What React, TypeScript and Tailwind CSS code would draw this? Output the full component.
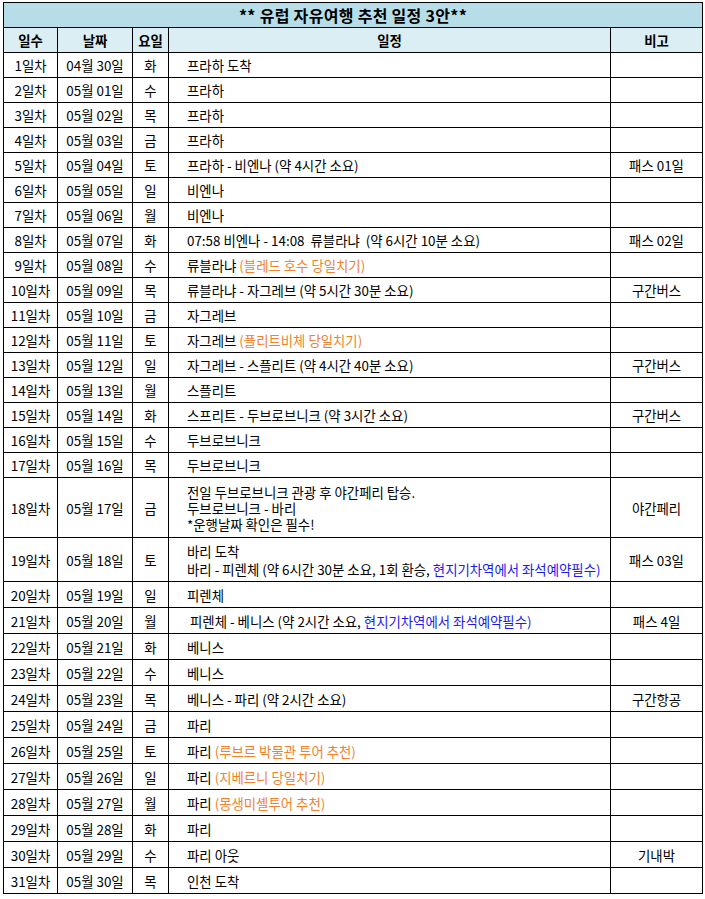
import React from "react";

type Part = { t: string; c?: "orange" | "blue" };
type Row = {
  day: string;
  date: string;
  dow: string;
  plan: Part[][];
  note?: string;
  h: string;
  lead?: string;
  indent?: boolean;
};

const P = (t: string, c?: "orange" | "blue"): Part => ({ t, c });

const rows: Row[] = [
  { day: "1일차", date: "04월 30일", dow: "화", plan: [[P("프라하 도착")]], h: "h-[25px]" },
  { day: "2일차", date: "05월 01일", dow: "수", plan: [[P("프라하")]], h: "h-[25px]" },
  { day: "3일차", date: "05월 02일", dow: "목", plan: [[P("프라하")]], h: "h-[25px]" },
  { day: "4일차", date: "05월 03일", dow: "금", plan: [[P("프라하")]], h: "h-[25px]" },
  { day: "5일차", date: "05월 04일", dow: "토", plan: [[P("프라하 - 비엔나 (약 4시간 소요)")]], note: "패스 01일", h: "h-[25px]" },
  { day: "6일차", date: "05월 05일", dow: "일", plan: [[P("비엔나")]], h: "h-[25px]" },
  { day: "7일차", date: "05월 06일", dow: "월", plan: [[P("비엔나")]], h: "h-[25px]" },
  { day: "8일차", date: "05월 07일", dow: "화", plan: [[P("07:58 비엔나 - 14:08  류블라냐  (약 6시간 10분 소요)")]], note: "패스 02일", h: "h-[25px]" },
  { day: "9일차", date: "05월 08일", dow: "수", plan: [[P("류블라냐 "), P("(블레드 호수 당일치기)", "orange")]], h: "h-[25px]" },
  { day: "10일차", date: "05월 09일", dow: "목", plan: [[P("류블라냐 - 자그레브 (약 5시간 30분 소요)")]], note: "구간버스", h: "h-[25px]" },
  { day: "11일차", date: "05월 10일", dow: "금", plan: [[P("자그레브")]], h: "h-[25px]" },
  { day: "12일차", date: "05월 11일", dow: "토", plan: [[P("자그레브 "), P("(플리트비체 당일치기)", "orange")]], h: "h-[25px]" },
  { day: "13일차", date: "05월 12일", dow: "일", plan: [[P("자그레브 - 스플리트 (약 4시간 40분 소요)")]], note: "구간버스", h: "h-[25px]" },
  { day: "14일차", date: "05월 13일", dow: "월", plan: [[P("스플리트")]], h: "h-[25px]" },
  { day: "15일차", date: "05월 14일", dow: "화", plan: [[P("스프리트 - 두브로브니크 (약 3시간 소요)")]], note: "구간버스", h: "h-[25px]" },
  { day: "16일차", date: "05월 15일", dow: "수", plan: [[P("두브로브니크")]], h: "h-[25px]" },
  { day: "17일차", date: "05월 16일", dow: "목", plan: [[P("두브로브니크")]], h: "h-[25px]" },
  {
    day: "18일차",
    date: "05월 17일",
    dow: "금",
    plan: [[P("전일 두브로브니크 관광 후 야간페리 탑승.")], [P("두브로브니크 - 바리")], [P("*운행날짜 확인은 필수!")]],
    note: "야간페리",
    h: "h-[60px]",
    lead: "leading-[16px]",
  },
  {
    day: "19일차",
    date: "05월 18일",
    dow: "토",
    plan: [[P("바리 도착")], [P("바리 - 피렌체 (약 6시간 30분 소요, 1회 환승, "), P("현지기차역에서 좌석예약필수)", "blue")]],
    note: "패스 03일",
    h: "h-[44px]",
    lead: "leading-[18px]",
  },
  { day: "20일차", date: "05월 19일", dow: "일", plan: [[P("피렌체")]], h: "h-[26px]" },
  {
    day: "21일차",
    date: "05월 20일",
    dow: "월",
    plan: [[P("피렌체 - 베니스 (약 2시간 소요, "), P("현지기차역에서 좌석예약필수)", "blue")]],
    note: "패스 4일",
    h: "h-[26px]",
    indent: true,
  },
  { day: "22일차", date: "05월 21일", dow: "화", plan: [[P("베니스")]], h: "h-[26px]" },
  { day: "23일차", date: "05월 22일", dow: "수", plan: [[P("베니스")]], h: "h-[26px]" },
  { day: "24일차", date: "05월 23일", dow: "목", plan: [[P("베니스 - 파리 (약 2시간 소요)")]], note: "구간항공", h: "h-[26px]" },
  { day: "25일차", date: "05월 24일", dow: "금", plan: [[P("파리")]], h: "h-[26px]" },
  { day: "26일차", date: "05월 25일", dow: "토", plan: [[P("파리 "), P("(루브르 박물관 투어 추천)", "orange")]], h: "h-[26px]" },
  { day: "27일차", date: "05월 26일", dow: "일", plan: [[P("파리 "), P("(지베르니 당일치기)", "orange")]], h: "h-[26px]" },
  { day: "28일차", date: "05월 27일", dow: "월", plan: [[P("파리 "), P("(몽생미셸투어 추천)", "orange")]], h: "h-[26px]" },
  { day: "29일차", date: "05월 28일", dow: "화", plan: [[P("파리")]], h: "h-[26px]" },
  { day: "30일차", date: "05월 29일", dow: "수", plan: [[P("파리 아웃")]], note: "기내박", h: "h-[26px]" },
  { day: "31일차", date: "05월 30일", dow: "목", plan: [[P("인천 도착")]], h: "h-[26px]" },
];

const cell = "border border-black p-0 align-middle";

export default function App() {
  return (
    <div
      className="bg-white w-[705px] h-[899px] pt-[2px] pl-[3px] text-black"
      style={{ fontFamily: '"Noto Sans CJK KR", "Noto Sans", sans-serif' }}
    >
      <table className="border-collapse table-fixed w-[700px] text-[13.4px] leading-[18px]">
        <colgroup>
          <col className="w-[54px]" />
          <col className="w-[75px]" />
          <col className="w-[36px]" />
          <col className="w-[442px]" />
          <col className="w-[92px]" />
        </colgroup>
        <tbody>
          {/* Title */}
          <tr>
            <td colSpan={5} className={`${cell} h-[25px] bg-[#b7dee8] text-center font-bold text-[16px] tracking-[0.3px]`}>
              ** 유럽 자유여행 추천 일정 3안**
            </td>
          </tr>

          {/* Header */}
          <tr className="bg-[#daeef3] font-bold text-[13.4px]">
            <td className={`${cell} h-[25px] text-center`}>일수</td>
            <td className={`${cell} text-center`}>날짜</td>
            <td className={`${cell} text-center`}>요일</td>
            <td className={`${cell} text-center`}>일정</td>
            <td className={`${cell} text-center`}>비고</td>
          </tr>

          {rows.map((r) => (
            <tr key={r.day}>
              <td className={`${cell} ${r.h} text-center`}>{r.day}</td>
              <td className={`${cell} text-center`}>{r.date}</td>
              <td className={`${cell} text-center`}>{r.dow}</td>
              <td className={`${cell} ${r.indent ? "pl-[21px]" : "pl-[18px]"} whitespace-pre ${r.lead ?? ""}`}>
                {r.plan.map((line, i) => (
                  <div key={i}>
                    {line.map((p, j) => (
                      <span
                        key={j}
                        className={
                          p.c === "orange" ? "text-[#f0822d]" : p.c === "blue" ? "text-[#1a1aef]" : ""
                        }
                      >
                        {p.t}
                      </span>
                    ))}
                  </div>
                ))}
              </td>
              <td className={`${cell} text-center`}>{r.note ?? ""}</td>
            </tr>
          ))}
        </tbody>
      </table>
    </div>
  );
}
